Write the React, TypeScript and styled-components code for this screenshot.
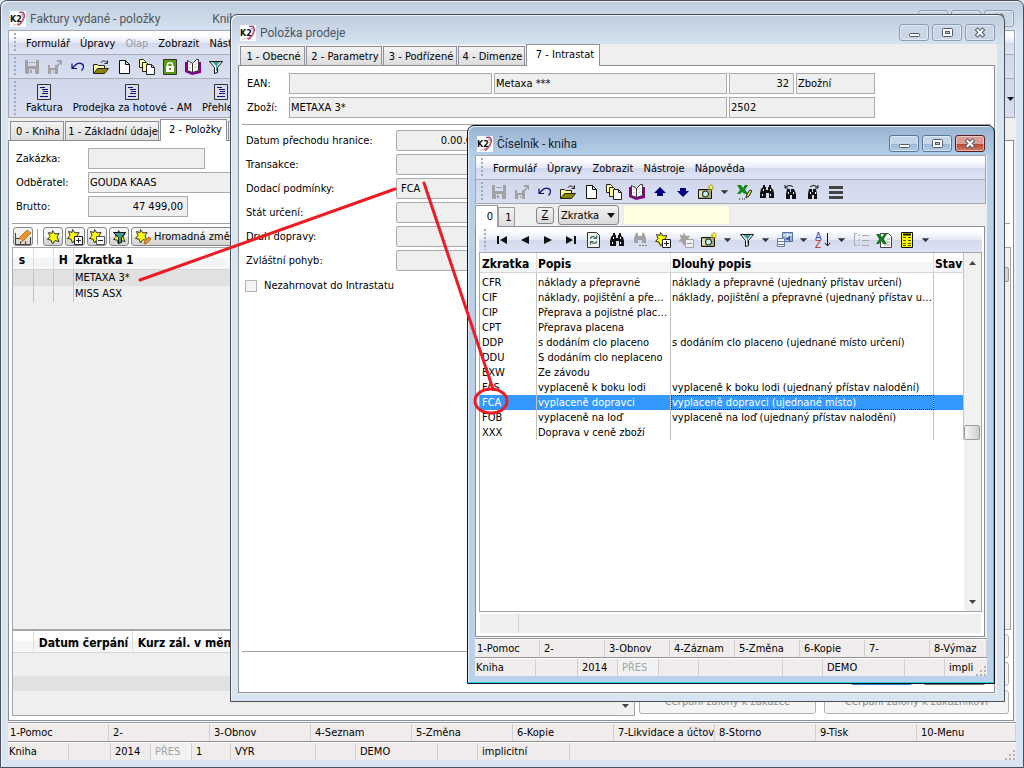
import React from 'react';
import styled, { createGlobalStyle, css } from 'styled-components';

const uiFont = '"DejaVu Sans Condensed", "DejaVu Sans", "Noto Sans", sans-serif';
const titleFont = 'Roboto, "Open Sans", "Noto Sans", sans-serif';

const Global = createGlobalStyle`
  *, *::before, *::after { box-sizing: border-box; }
  html, body { margin: 0; height: 100%; }
  body { font: 11px/14px ${uiFont}; color: #000; background: #d7e4f2; overflow: hidden; }
  #root { height: 100%; }
  button, input, select { font: inherit; color: inherit; margin: 0; }
`;

/* ---------- window chrome ---------- */

const Desktop = styled.div`
  position: relative;
  height: 100%;
  overflow: hidden;
`;

type Tone = 'active' | 'idle';

const WindowFrame = styled.section<{ $tone: Tone }>`
  display: flex;
  flex-direction: column;
  height: 100%;
  padding: 0 7px 7px;
  border: 1px solid ${p => (p.$tone === 'active' ? '#101418' : '#4b4f55')};
  border-radius: 7px 7px 0 0;
  background: ${p =>
    p.$tone === 'active'
      ? 'linear-gradient(#98b3d1 0, #b9d1ea 32px, #b9d1ea 100%)'
      : 'linear-gradient(#bfcedd 0, #d7e4f2 32px, #d7e4f2 100%)'};
  box-shadow: ${p =>
    p.$tone === 'active'
      ? 'inset -1px -1px 0 #2fd0e6, inset 1px 1px 0 #e4eefa'
      : 'inset 1px 1px 0 #eef4fb'};
`;

const ItemWindow = styled.div`
  position: absolute;
  inset: 14px 19px 66px 230px;
`;

const ListWindow = styled.div`
  position: absolute;
  inset: 125px 29px 84px 467px;
`;

const TitleBar = styled.header`
  display: flex;
  align-items: center;
  flex: none;
  height: 29px;
  padding: 6px 2px 0;
`;

const TitleText = styled.h1<{ $tone: Tone }>`
  margin: 0 0 0 4px;
  font: 12px/16px ${titleFont};
  color: ${p => (p.$tone === 'active' ? '#1b2430' : '#50565e')};
  white-space: pre;
`;

const TitleExtra = styled.span`
  margin-left: 52px;
`;

const CaptionButtons = styled.div`
  display: flex;
  gap: 3px;
  margin-left: auto;
`;

const CaptionButton = styled.button<{ $kind: 'idle' | 'blue' | 'red' }>`
  display: flex;
  align-items: center;
  justify-content: center;
  width: 30px;
  height: 17px;
  padding: 0;
  border-radius: 3px;
  border: 1px solid ${p => ({ idle: '#8d9cb3', blue: '#5b7697', red: '#5c1c22' })[p.$kind]};
  box-shadow: inset 0 0 0 1px rgba(255, 255, 255, 0.45);
  background: ${p =>
    ({
      idle: '#c9d6e6',
      blue: 'linear-gradient(#c3d6ea 0 50%, #9ab6d4 50%, #b4cee8)',
      red: 'linear-gradient(#dc9d94 0 50%, #b8402c 50%, #cf8069)',
    })[p.$kind]};
`;

const CaptionGlyph = ({ name }: { name: 'min' | 'max' | 'close' }) => (
  <svg width="14" height="11" viewBox="0 0 14 11">
    {name === 'min' && <rect x="2.5" y="6.5" width="10" height="3" rx="1" fill="#fff" stroke="#4f596b" />}
    {name === 'max' && (
      <g fill="none" stroke="#4f596b">
        <rect x="2.5" y="1.5" width="10" height="8" rx="1" fill="#fff" />
        <rect x="5.5" y="4.5" width="4" height="2" fill="#b8c8da" />
      </g>
    )}
    {name === 'close' && (
      <g strokeLinecap="square">
        <path d="M4.500 3L9.500 8M9.500 3L4.500 8" stroke="#4f596b" strokeWidth="4" />
        <path d="M4.500 3L9.500 8M9.500 3L4.500 8" stroke="#fff" strokeWidth="2" />
      </g>
    )}
  </svg>
);

const K2Logo = () => (
  <svg width="16" height="16" viewBox="0 0 16 16">
    <rect width="16" height="16" fill="#fff" />
    <path d="M9 1.500c4-1.500 6 1 5 5-1 4-3 6-6 8" fill="none" stroke="#8b2c70" strokeWidth="1.300" />
    <path d="M11 3c3 1 3 4 1 7-1 2-3 3-5 4" fill="none" stroke="#e8746c" strokeWidth="1.200" />
    <path d="M3 14.500l5-2 4-3" fill="none" stroke="#e3b7a8" />
    <text x="0" y="11" fontFamily="DejaVu Sans, sans-serif" fontWeight="bold" fontSize="8" fill="#111">K2</text>
  </svg>
);

const Caption = ({ tone, title, extra }: { tone: Tone; title: string; extra?: string }) => (
  <TitleBar>
    <K2Logo />
    <TitleText $tone={tone}>
      {title}
      {extra && <TitleExtra>{extra}</TitleExtra>}
    </TitleText>
    <CaptionButtons>
      <CaptionButton $kind={tone === 'active' ? 'blue' : 'idle'} aria-label="Minimalizovat"><CaptionGlyph name="min" /></CaptionButton>
      <CaptionButton $kind={tone === 'active' ? 'blue' : 'idle'} aria-label="Maximalizovat"><CaptionGlyph name="max" /></CaptionButton>
      <CaptionButton $kind={tone === 'active' ? 'red' : 'idle'} aria-label="Zavřít"><CaptionGlyph name="close" /></CaptionButton>
    </CaptionButtons>
  </TitleBar>
);

const Client = styled.div`
  display: flex;
  flex-direction: column;
  flex: 1;
  min-height: 0;
  background: #efefef;
`;

/* ---------- icons ---------- */

const starPath = 'M5.500.500l2.500 3.500 4-.5-2 3.500 2 4.500-4-1-2.500 3.500-1.500-4-3.500-.5 2.500-3-1.500-4 3.500 1z';

const glyphs: Record<string, React.ReactNode> = {
  save: <g><path d="M1 1h14v14H2l-1-1z" fill="#a2a2a2" /><path d="M4 1h8v6H4zM5 10h6v5H5z" fill="#d5daee" /><path d="M6 11h2v3H6zM5 3h6v1H5z" fill="#a2a2a2" /></g>,
  export: <g><path d="M1 6h10v9H1z" fill="#a2a2a2" /><path d="M3 6h5v3H3zM4 11h4v4H4z" fill="#d5daee" /><path d="M6 12h1v2H6zM10 1h5v5h-1V4l-3 3-1-1 3-3h-3z" fill="#a2a2a2" /></g>,
  undo: <path d="M2 4.500v5h5M2.500 9l3-3c3-3 8-2 8 1.500 0 2-1 3-2 4" fill="none" stroke="#10107a" strokeWidth="1.200" />,
  folder: <g><path d="M.5 14.500v-9h4l1 1h6v3" fill="#ffff9c" stroke="#222" /><path d="M.5 14.500l4-5h11l-4 5z" fill="#8a8400" stroke="#222" /><path d="M8 3.500c1-2 4-2 6 0m.5-2v3h-3" fill="none" stroke="#222" /></g>,
  page: <path d="M3.500 1.500h6l4 4v9h-10zM9.500 1.500v4h4" fill="#fff" stroke="#111" />,
  copies: <g stroke="#222"><path d="M.5.500h4l2 2v6h-6z" fill="#ffff9c" /><path d="M3.500 3.500h4l2 2v7h-6z" fill="#ffff9c" /><path d="M7.500 5.500h5l3 3v7h-8zM12.500 5.500v3h3" fill="#fff" /></g>,
  lock: <g><path d="M1.500.5h13v15h-13z" fill="#5a9a12" stroke="#333" /><path d="M5.500 8V5.500c0-2.500 5-2.500 5 0V8" fill="none" stroke="#fff" strokeWidth="1.500" /><path d="M4 7h8v6H4z" fill="#fff" /><path d="M7 9h2v2H7z" fill="#5a9a12" /></g>,
  book: <g><path d="M0 3v10l7 3 9-2V3h-2v9H2V3z" fill="#8b008b" /><path d="M2.500 1.500l5 3v9l-5-2zM7.500 4.500l4-4h2v11l-6 2z" fill="#fff" stroke="#333" /><path d="M9.500 6l2-2M9.500 9l2-2M4.500 5l1 1M4.500 8l1 1" stroke="#aaa" /></g>,
  filter: <g><path d="M1.500 2.500h13l-5 6v5l-3 1v-6z" fill="#fff" stroke="#111" /><path d="M4 3h8l-3 4v5H8V7z" fill="#3fa0a0" /></g>,
  up: <path d="M8 3l6 6h-3v3H5V9H2z" fill="#00007f" />,
  down: <path d="M8 13l6-6h-3V4H5v3H2z" fill="#00007f" />,
  camera: <g><path d="M.5 5.500h13v9H.5z" fill="#a8aa70" stroke="#111" /><path d="M1 7h3v6H1z" fill="#e0e0b8" /><circle cx="7.500" cy="10" r="3" fill="#c6f0f0" stroke="#111" /><path d="M13 0v7M9.500 3.500h6M10.500 1l5 5M15.500 1l-5 5" stroke="#b0a800" /><path d="M12 2h2v3h-2z" fill="#ffff30" /></g>,
  drop: <path d="M4 6h8l-4 4z" fill="#333" />,
  excelPen: <g><path d="M1 1h4l2 3 2-3h3L9 6l4 4H9L6 8l-2 2H1l3-4z" fill="#0e8a1d" /><path d="M10 14l1-4 3-4 2 1-3 5z" fill="#e8d83a" stroke="#222" /><path d="M3 15h1M6 15h1M8 15h1" stroke="#111" /></g>,
  binoculars: <g><path d="M4 1h2v2h1v3h2V3h1V1h2v2l1 2 1 0 1 4v5h-5v-5H7v5H1V9l1-4 2-2z" fill="#111" /><path d="M4 5h1v2H4zM11 5h1v2h-1zM3 10h1v2H3zM11 10h1v2h-1z" fill="#fff" /></g>,
  binoPrev: <g><path d="M5 5h3v3h1V5h3l2 5v5h-4v-4H8v4H4v-5z" fill="#111" /><path d="M6 8h1v2H6zM11 8h1v2h-1z" fill="#fff" /><path d="M3 1v3h3M3 4c2-3 6-3 8-1" fill="none" stroke="#111" /></g>,
  binoNext: <g><path d="M4 5h3v3h1V5h3l1 5v5H9v-4H7v4H3v-5z" fill="#111" /><path d="M5 8h1v2H5zM10 8h1v2h-1z" fill="#fff" /><path d="M13 1v3h-3M13 4c-2-3-6-3-8-1" fill="none" stroke="#111" /></g>,
  binoGray: <g><path d="M4 1h2v3h4V1h2l2 5v5h-4V8H6v3H2V6z" fill="#a2a2a2" /><path d="M7 13h2v1H7zM10 13h2v1h-2zM13 13h2v1h-2z" fill="#777" /></g>,
  list: <g fill="#444"><path d="M1 2h14v3H1zM1 7h14v3H1zM1 12h14v3H1z" /></g>,
  first: <path d="M3 4h2v8H3zM13 4v8L6 8z" fill="#111" />,
  prev: <path d="M12 4v8L4 8z" fill="#111" />,
  next: <path d="M4 4v8l8-4z" fill="#111" />,
  last: <path d="M11 4h2v8h-2zM3 4v8l7-4z" fill="#111" />,
  refresh: <g><path d="M1.500.5h9l3 3v12h-12z" fill="#eef3ec" stroke="#333" /><path d="M4.500 7c0-3 4-3 5-1m1-2.500v3h-3M10.500 9c0 3-4 3-5 1m-1 2.500v-3h3" fill="none" stroke="#3c6a66" strokeWidth="1.200" /></g>,
  starPlus: <g><path d={starPath} fill="#ffff00" stroke="#333" /><path d="M7.500 7.500h8v8h-8z" fill="#fff" stroke="#222" /><path d="M9 11.500h5M11.500 9v5" stroke="#222" /></g>,
  starMinus: <g><path d={starPath} fill="#ffff00" stroke="#333" /><path d="M7.500 7.500h8v8h-8z" fill="#fff" stroke="#555" /><path d="M9 11.500h5" stroke="#222" /></g>,
  starGray: <g><path d={starPath} fill="#a2a2a2" /><path d="M7.500 7.500h8v8h-8z" fill="#eee" stroke="#a2a2a2" /><path d="M9 11.500h5" stroke="#999" /></g>,
  star: <g transform="translate(2 1)"><path d={starPath} fill="#ffff00" stroke="#333" /></g>,
  starFilter: <g><g transform="translate(2 1)"><path d={starPath} fill="#ffff00" stroke="#333" /></g><path d="M2.500 3.500h12l-4 5v5l-3 1v-6z" fill="#3c9a9a" stroke="#111" /></g>,
  starPen: <g><path d={starPath} fill="#ffff00" stroke="#333" /><path d="M9 15l1-3 4-4 2 2-4 4z" fill="#e7962e" stroke="#b36a12" /></g>,
  pen: <g><path d="M.5 4v11.500h15V8M.5 9.500h4M5.500 15v-3M10.500 15v-3" stroke="#444" fill="none" /><path d="M4 11l1-3 7-7 4 3-7 7-3 2z" fill="#e7962e" stroke="#c2741b" /><path d="M4 12l1-2 2 2z" fill="#fff" /></g>,
  columns: <g><path d="M5.500.5h10v9h-10z" fill="#9bb4da" stroke="#556f9c" /><path d="M6 3h9M10.500 1v8" stroke="#fff" /><path d="M.5 6.500h7v8h-7z" fill="#fff" stroke="#6b7fa5" /><path d="M1 9.500h6M1 12.500h6" stroke="#6b7fa5" /><path d="M8 7l5-3v5z" fill="#3c5a95" /></g>,
  sort: <g><text x="0" y="8" fontSize="10" fontFamily="Liberation Sans, sans-serif" fill="#3556b8">A</text><text x="0" y="16" fontSize="10" fontFamily="Liberation Sans, sans-serif" fill="#b03030">Z</text><path d="M12.500 1v12M10 11l2.500 3 2.500-3" stroke="#111" fill="none" /></g>,
  tree: <g fill="none" stroke="#a6a6aa"><path d="M4 1.500H1.500v12H4M5 3.500l2-1M5 8.500l2-1M5 13.500l2-1M9 3.500h7M9 8.500h7M9 13.500h7" /></g>,
  excel: <g><path d="M4.500 1.500h8l3 3v11h-11z" fill="#fff" stroke="#444" /><path d="M11 7h3M11 10h3M8 13h6" stroke="#999" /><path d="M0 2h4l2 3 2-3h3L8 7l3 5H7L5 9l-2 3H0l3-5z" fill="#197a26" /></g>,
  table: <g><path d="M2.500.5h11v15h-11z" fill="#ffff00" stroke="#111" /><path d="M4 2.500h8" stroke="#111" strokeWidth="2" /><path d="M4 5.500h3M9 5.500h3M4 8.500h3M9 8.500h3M4 11.500h3M9 11.500h3M4 13.500h3M9 13.500h3" stroke="#55550a" /></g>,
  document: <g><path d="M1.500.5h13v15h-13z" fill="#dcdce8" stroke="#333" /><path d="M4 3.500h5M6 5.500h6M7 7.500h5M6 9.500h6M4 12.500h8" stroke="#10107a" /></g>,
};

const Icon = ({ name }: { name: string }) => (
  <svg width="16" height="16" viewBox="0 0 16 16" aria-hidden="true">{glyphs[name]}</svg>
);

/* ---------- bars ---------- */

const BarStack = styled.div`
  flex: none;
  margin-right: 1px;
  border: 1px solid #a3a6ae;
  background: #a9abb5;
  display: flex;
  flex-direction: column;
  gap: 1px;
`;

const Bar = styled.div<{ $height?: number; $light?: boolean }>`
  position: relative;
  display: flex;
  align-items: center;
  flex: none;
  height: ${p => p.$height ?? 23}px;
  overflow: hidden;
  background: ${p =>
    p.$light ? 'linear-gradient(#fdfdff 0 20%, #e6e9f7 50%, #d3d9ed 52%, #dfe3f4)' : 'linear-gradient(#d1d8ec, #d9dff1)'};
`;

const Grip = styled.span`
  flex: none;
  align-self: stretch;
  width: 2px;
  margin: 2px 0 2px 5px;
  background: repeating-linear-gradient(#a2a9bd 0 2px, transparent 2px 4px);
`;

const MenuButton = styled.button`
  padding: 2px 0 0;
  border: 0;
  background: none;
  margin-left: 10px;
  white-space: nowrap;
  &:disabled { color: #9c9ea6; }
`;

const ToolButton = styled.button<{ $narrow?: boolean }>`
  display: flex;
  align-items: center;
  justify-content: center;
  flex: none;
  width: ${p => (p.$narrow ? 15 : 23)}px;
  height: 22px;
  padding: 0;
  border: 0;
  background: none;
`;

const ToolRow = styled.div`
  display: flex;
  margin-left: 4px;
`;

const LaunchButton = styled.button`
  display: flex;
  flex-direction: column;
  align-items: center;
  gap: 1px;
  flex: none;
  padding: 2px 0 0;
  border: 0;
  background: none;
  margin-left: 10px;
  white-space: nowrap;
`;

const BarEnd = styled.span`
  display: flex;
  align-items: flex-end;
  align-self: flex-end;
  margin-left: auto;
  padding-bottom: 16px;
`;

const Menu = ({ items }: { items: { label: string; off?: boolean }[] }) => (
  <Bar $light>
    <Grip />
    {items.map(i => (
      <MenuButton key={i.label} disabled={i.off}>{i.label}</MenuButton>
    ))}
  </Bar>
);

const Tools = ({ names }: { names: string[] }) => (
  <ToolRow>
    {names.map((n, i) => (
      <ToolButton key={i} $narrow={n === 'drop'} aria-label={n}><Icon name={n} /></ToolButton>
    ))}
  </ToolRow>
);

/* ---------- tabs ---------- */

const TabStrip = styled.div<{ $height: number }>`
  display: flex;
  align-items: flex-end;
  flex: none;
  height: ${p => p.$height}px;
  padding-left: 2px;
  gap: 1px;
`;

const Tab = styled.button<{ $w: number; $on?: boolean }>`
  flex: none;
  width: ${p => p.$w}px;
  height: ${p => (p.$on ? 22 : 19)}px;
  margin-bottom: ${p => (p.$on ? -1 : 0)}px;
  padding: ${p => (p.$on ? '0 0 1px 4px' : '2px 0 0 2px')};
  position: relative;
  border: 1px solid #8e8f99;
  border-bottom: 0;
  background: ${p => (p.$on ? '#fff' : 'linear-gradient(#f3f3f3, #dcdcdc)')};
  white-space: nowrap;
`;

const Panel = styled.div`
  display: flex;
  flex-direction: column;
  flex: 1;
  min-height: 0;
  margin-right: 2px;
  border: 1px solid #8b8c96;
  background: #fff;
`;

/* ---------- form ---------- */

const Rule = styled.hr`
  flex: none;
  align-self: stretch;
  height: 1px;
  margin: 0 3px;
  border: 0;
  background: #a0a0a0;
`;

const FormRows = styled.div<{ $pad: string }>`
  display: flex;
  flex-direction: column;
  gap: 3px;
  padding: ${p => p.$pad};
`;

const FormRow = styled.div`
  display: flex;
  gap: 2px;
  height: 21px;
`;

const Label = styled.label<{ $w: number }>`
  flex: none;
  width: ${p => p.$w}px;
  line-height: 22px;
  white-space: nowrap;
`;

const Field = styled.input<{ $w: number; $right?: boolean; $round?: boolean }>`
  flex: none;
  width: ${p => p.$w}px;
  height: 21px;
  padding: 0 4px 0 ${p => (p.$round ? 4 : 1)}px;
  border: 1px solid #acacac;
  border-radius: ${p => (p.$round ? 2 : 0)}px;
  background: #efefef;
  outline: 0;
  text-align: ${p => (p.$right ? 'right' : 'left')};
`;

const CheckRow = styled.label`
  display: flex;
  align-items: center;
  gap: 7px;
  padding: 8px 6px;
  line-height: 14px;
`;

const CheckBox = styled.input`
  appearance: none;
  width: 12px;
  height: 12px;
  border: 1px solid #b4b4b4;
  background: #f4f4f4;
`;

const SmallButton = styled.button<{ $wide?: boolean }>`
  display: flex;
  align-items: center;
  justify-content: center;
  gap: 3px;
  flex: none;
  width: ${p => (p.$wide ? 'auto' : '20px')};
  height: 19px;
  padding: ${p => (p.$wide ? '0 6px 0 3px' : '0')};
  border: 1px solid #85868a;
  border-radius: 3px;
  background: linear-gradient(#f4f4f4 0 50%, #e2e2e2 50%, #d4d4d4);
`;

const ButtonRow = styled.div`
  display: flex;
  gap: 2px;
  padding: 3px 4px 1px;
`;

const Divider = styled.span`
  width: 1px;
  margin: 2px 3px 1px 2px;
  background: #a0a0a0;
`;

/* ---------- grids ---------- */

const GridBox = styled.div<{ $gray?: boolean }>`
  display: flex;
  flex: 1;
  min-height: 0;
  overflow: hidden;
  margin: 0 2px 0 3px;
  border: 1px solid #a4a5ad;
  background: ${p => (p.$gray ? '#efefef' : '#fff')};
`;

const GridBody = styled.div`
  flex: 1;
  min-width: 0;
  overflow: hidden;
`;

const Table = styled.table<{ $row: number; $pinned?: boolean; $tall?: boolean }>`
  width: 100%;
  table-layout: fixed;
  border-collapse: separate;
  border-spacing: 0;
  th, td {
    text-align: left;
    white-space: nowrap;
    overflow: hidden;
    border-right: 1px solid #c3c3c3;
  }
  th {
    height: ${p => (p.$tall ? 22 : 20)}px;
    padding: 2px 0 0 1px;
    font: bold 12px/16px ${uiFont};
    border-right-color: #dedede;
    border-bottom: 1px solid #d5d5d5;
    background: linear-gradient(#fff 0 45%, #f3f4f6 46%, #f5f6f8);
  }
  td { height: ${p => p.$row}px; padding: 0 0 0 1px; line-height: ${p => p.$row}px; text-overflow: ellipsis; }
  tr > :first-child { padding-left: 2px; }
  tr > :last-child { border-right: ${p => (p.$pinned ? '1px solid #c3c3c3' : '0')}; }
`;

const Row = styled.tr<{ $mark?: 'gray' | 'blue' }>`
  ${p => p.$mark === 'gray' && css`background: #e1e1e1;`}
  ${p => p.$mark === 'blue' && css`background: #3399ff; color: #fff;
    td:nth-child(3) { outline: 1px dotted #40260c; outline-offset: -1px; }`}
`;

const Col = styled.col<{ $w?: number }>`
  width: ${p => (p.$w ? `${p.$w}px` : 'auto')};
`;

const Spacer = styled.tr`
  height: 1px;
  td { height: 2px; }
`;

const ScrollTrack = styled.div`
  display: flex;
  flex-direction: column;
  flex: none;
  width: 17px;
  background: #f1f1f1;
`;

const ScrollArrow = styled.button`
  display: flex;
  align-items: center;
  justify-content: center;
  flex: none;
  height: 19px;
  padding: 0;
  border: 0;
  background: none;
`;

const ScrollThumb = styled.span`
  flex: none;
  height: 15px;
  margin-right: 1px;
  border: 1px solid #9b9b9b;
  border-radius: 2px;
  background: linear-gradient(90deg, #f6f6f6, #cfcfcf);
`;

const ScrollGap = styled.span<{ $grow: number }>`
  flex: ${p => p.$grow} 1 0;
`;

const Scroll = ({ before }: { before: number }) => (
  <ScrollTrack>
    <ScrollArrow aria-label="Nahoru"><svg width="7" height="4"><path d="M0 4h7L3.500 0z" fill="#444" /></svg></ScrollArrow>
    <ScrollGap $grow={before} />
    <ScrollThumb />
    <ScrollGap $grow={1} />
    <ScrollArrow aria-label="Dolů"><svg width="7" height="4"><path d="M0 0h7L3.500 4z" fill="#444" /></svg></ScrollArrow>
  </ScrollTrack>
);

/* ---------- bottom strips ---------- */

const Strip = styled.div`
  position: relative;
  display: flex;
  flex: none;
  height: 19px;
  border-top: 1px solid #8f9095;
  background: #f0ecec;
  box-shadow: inset 0 1px 0 #fff;
`;

const Strips = styled.footer`
  flex: none;
  padding-top: 1px;
  background: #fff;
`;

const cellBox = css<{ $w?: number }>`
  flex: ${p => (p.$w ? `0 0 ${p.$w}px` : '1 1 0')};
  min-width: 0;
  margin-top: 1px;
  border: 0;
  border-right: 1px solid #d0cece;
  text-align: left;
  line-height: 18px;
  white-space: nowrap;
  overflow: hidden;
`;

const Cell = styled.span<{ $w?: number; $muted?: boolean }>`
  ${cellBox}
  padding-left: 4px;
  &:first-child { padding-left: 1px; }
  &:nth-last-child(2) { border-right: 0; }
  ${p => p.$muted && css`color: #a3a3a3; background: #f2f2f2;`}
`;

const FnButton = styled.button<{ $w?: number }>`
  ${cellBox}
  padding: 0 0 0 4px;
  background: none;
  &:first-child { padding-left: 2px; }
`;

const SizeGrip = styled.svg`
  align-self: flex-end;
  flex: none;
  margin-right: 1px;
`;

const Corner = () => (
  <SizeGrip width="10" height="10" fill="#b5b3b3">
    <path d="M8 0h2v2H8zM8 4h2v2H8zM8 8h2v2H8zM4 4h2v2H4zM4 8h2v2H4zM0 8h2v2H0z" />
  </SizeGrip>
);

type StatusCell = { text?: string; w?: number; muted?: boolean };

const StatusStrips = ({ keys, keyWidth, cells }: { keys: string[]; keyWidth: number; cells: StatusCell[] }) => (
  <Strips>
    <Strip>
      {keys.map((k, i) => (
        <FnButton key={k} $w={i < keys.length - 1 ? keyWidth : undefined}>{k}</FnButton>
      ))}
    </Strip>
    <Strip>
      {cells.map((c, i) => (
        <Cell key={i} $w={c.w} $muted={c.muted}>{c.text}</Cell>
      ))}
      <Corner />
    </Strip>
  </Strips>
);

/* ---------- invoice window ---------- */

const LowerArea = styled.div`
  display: flex;
  flex: none;
  height: 86px;
  margin-bottom: 4px;
`;

const LowerGrid = styled.div`
  display: flex;
  flex: 0 0 626px;
  > div { margin-right: 0; }
`;

const LowerButtons = styled.div`
  display: grid;
  flex: 1;
  grid-template-columns: 177px 1fr;
  grid-template-rows: repeat(3, 24px);
  gap: 4px 8px;
  padding: 4px 4px 0 4px;
`;

const WideButton = styled.button`
  border: 1px solid #b0b1b5;
  border-radius: 3px;
  background: #f4f4f4;
  color: #8d8d8d;
`;

const MarkedLine = styled.div`
  height: 15px;
  margin-top: 23px;
  background: #e1e1e1;
`;

const InvoiceWindow = () => (
  <WindowFrame $tone="idle">
    <Caption tone="idle" title="Faktury vydané - položky" extra="Kniha" />
    <Client>
      <BarStack>
        <Menu items={[{ label: 'Formulář' }, { label: 'Úpravy' }, { label: 'Olap', off: true }, { label: 'Zobrazit' }, { label: 'Nástroje' }]} />
        <Bar><Grip /><Tools names={['save', 'export', 'undo', 'folder', 'page', 'copies', 'lock', 'book', 'filter']} /></Bar>
        <Bar $height={38}>
          <Grip />
          {['Faktura', 'Prodejka za hotové - AM', 'Přehled'].map(t => (
            <LaunchButton key={t}><Icon name="document" />{t}</LaunchButton>
          ))}
          <BarEnd><svg width="7" height="4"><path d="M0 0h7L3.500 4z" fill="#111" /></svg></BarEnd>
        </Bar>
      </BarStack>
      <TabStrip $height={22}>
        <Tab $w={54}>0 - Kniha</Tab>
        <Tab $w={94}>1 - Základní údaje</Tab>
        <Tab $w={67} $on>2 - Položky</Tab>
        <Tab $w={40}>3</Tab>
      </TabStrip>
      <Panel>
        <FormRows $pad="7px 7px 6px">
          <FormRow><Label $w={70} htmlFor="order">Zakázka:</Label><Field id="order" $w={117} readOnly /></FormRow>
          <FormRow><Label $w={70} htmlFor="customer">Odběratel:</Label><Field id="customer" $w={260} defaultValue="GOUDA KAAS" readOnly /></FormRow>
          <FormRow><Label $w={70} htmlFor="gross">Brutto:</Label><Field id="gross" $w={100} $right defaultValue="47 499,00" readOnly /></FormRow>
        </FormRows>
        <Rule />
        <ButtonRow>
          <SmallButton aria-label="Upravit"><Icon name="pen" /></SmallButton>
          <Divider />
          <SmallButton aria-label="Hvězda"><Icon name="star" /></SmallButton>
          <SmallButton aria-label="Přidat"><Icon name="starPlus" /></SmallButton>
          <SmallButton aria-label="Odebrat"><Icon name="starMinus" /></SmallButton>
          <SmallButton aria-label="Filtr"><Icon name="starFilter" /></SmallButton>
          <SmallButton $wide><Icon name="starPen" />Hromadná změna</SmallButton>
        </ButtonRow>
        <GridBox $gray>
          <GridBody>
            <Table $row={16} $tall>
              <colgroup><Col $w={21} /><Col $w={20} /><Col $w={20} /><Col /></colgroup>
              <thead><tr><th>&nbsp;s</th><th /><th>&nbsp;H</th><th>Zkratka 1</th></tr></thead>
              <tbody>
                <Row $mark="gray"><td /><td /><td /><td>METAXA 3*</td></Row>
                <Row><td /><td /><td /><td>MISS ASX</td></Row>
              </tbody>
            </Table>
          </GridBody>
          <Scroll before={0} />
        </GridBox>
        <LowerArea>
          <LowerGrid>
            <GridBox $gray>
              <GridBody>
                <Table $row={24} $tall>
                  <colgroup><Col $w={21} /><Col $w={99} /><Col /></colgroup>
                  <thead><tr><th /><th>&nbsp;Datum čerpání</th><th>&nbsp;Kurz zál. v měně</th></tr></thead>
                </Table>
                <MarkedLine />
              </GridBody>
              <Scroll before={0} />
            </GridBox>
          </LowerGrid>
          <LowerButtons>
            <WideButton disabled /><WideButton disabled />
            <WideButton disabled /><WideButton disabled />
            <WideButton disabled>Čerpání zálohy k zakázce</WideButton>
            <WideButton disabled>Čerpání zálohy k zákazníkovi</WideButton>
          </LowerButtons>
        </LowerArea>
      </Panel>
      <StatusStrips
        keyWidth={101}
        keys={['1-Pomoc', '2-', '3-Obnov', '4-Seznam', '5-Změna', '6-Kopie', '7-Likvidace a účtová', '8-Storno', '9-Tisk', '10-Menu']}
        cells={[
          { text: 'Kniha', w: 61 }, { w: 42 }, { text: '2014', w: 40 }, { text: 'PŘES', w: 41, muted: true }, { text: '1', w: 39 },
          { text: 'VYR', w: 85 }, { w: 40 }, { text: 'DEMO', w: 82 }, { w: 40 }, { text: 'implicitní', w: 92 }, {},
        ]}
      />
    </Client>
  </WindowFrame>
);

/* ---------- sale item window ---------- */

const DialogFooter = styled.div`
  display: flex;
  justify-content: flex-end;
  align-items: flex-end;
  gap: 10px;
  flex: none;
  height: 40px;
  padding: 0 8px 7px;
`;

const DialogButton = styled.button<{ $primary?: boolean }>`
  width: 63px;
  height: 23px;
  border: 1px solid ${p => (p.$primary ? '#2c7cc4' : '#6f6f6f')};
  border-radius: 3px;
  background: #eee;
`;

const Fill = styled.div`
  flex: 1;
`;

const ClientWhite = styled(Client)`
  padding-bottom: 1px;
`;

const intrastat = [
  { label: 'Datum přechodu hranice:', value: '0.00.0000', right: true },
  { label: 'Transakce:', value: '' },
  { label: 'Dodací podmínky:', value: 'FCA' },
  { label: 'Stát určení:', value: '' },
  { label: 'Druh dopravy:', value: '' },
  { label: 'Zvláštní pohyb:', value: '' },
];

const SaleItem = () => (
  <ItemWindow>
    <WindowFrame $tone="idle">
      <Caption tone="idle" title="Položka prodeje" />
      <ClientWhite>
        <TabStrip $height={21}>
          <Tab $w={65}>1 - Obecné</Tab>
          <Tab $w={76}>2 - Parametry</Tab>
          <Tab $w={74}>3 - Podřízené</Tab>
          <Tab $w={67}>4 - Dimenze</Tab>
          <Tab $w={74} $on>7 - Intrastat</Tab>
        </TabStrip>
        <Panel>
          <FormRows $pad="7px 8px 6px">
            <FormRow>
              <Label $w={40} htmlFor="ean">EAN:</Label>
              <Field id="ean" $w={203} readOnly />
              <Field aria-label="Název" $w={233} defaultValue="Metaxa ***" readOnly />
              <Field aria-label="Kód" $w={65} $right defaultValue="32" readOnly />
              <Field aria-label="Druh" $w={79} defaultValue="Zbožní" readOnly />
            </FormRow>
            <FormRow>
              <Label $w={40} htmlFor="goods">Zboží:</Label>
              <Field id="goods" $w={438} defaultValue="METAXA 3*" readOnly />
              <Field aria-label="Číslo" $w={146} defaultValue="2502" readOnly />
            </FormRow>
          </FormRows>
          <Rule />
          <FormRows $pad="5px 7px 0">
            {intrastat.map((f, i) => (
              <FormRow key={f.label}>
                <Label $w={148} htmlFor={`intrastat-${i}`}>{f.label}</Label>
                <Field id={`intrastat-${i}`} $w={100} $round $right={f.right} defaultValue={f.value} readOnly />
              </FormRow>
            ))}
          </FormRows>
          <CheckRow><CheckBox type="checkbox" />Nezahrnovat do Intrastatu</CheckRow>
          <Fill />
          <Rule />
          <DialogFooter>
            <DialogButton $primary>OK</DialogButton>
            <DialogButton>Storno</DialogButton>
          </DialogFooter>
        </Panel>
      </ClientWhite>
    </WindowFrame>
  </ItemWindow>
);

/* ---------- code list window ---------- */

const FilterStrip = styled.div`
  display: flex;
  align-items: flex-end;
  flex: none;
  height: 22px;
`;

const MiniTab = styled.button<{ $on?: boolean }>`
  position: relative;
  flex: none;
  width: ${p => (p.$on ? 23 : 17)}px;
  height: ${p => (p.$on ? 22 : 19)}px;
  margin-bottom: ${p => (p.$on ? -1 : 0)}px;
  padding: ${p => (p.$on ? '0 0 0 7px' : '1px 0 0 4px')};
  border: 1px solid #9a9ba3;
  border-bottom: 0;
  background: ${p => (p.$on ? '#fff' : 'linear-gradient(#f3f3f3, #dcdcdc)')};
`;

const KeyButton = styled.button`
  align-self: center;
  width: 18px;
  height: 17px;
  margin-left: 21px;
  padding: 0;
  border: 1px solid #85868a;
  border-radius: 3px;
  background: linear-gradient(#f2f2f2, #dadada);
  line-height: 12px;
`;

const Combo = styled.div`
  position: relative;
  align-self: center;
  margin-left: 4px;
  svg { position: absolute; right: 4px; top: 8px; pointer-events: none; }
`;

const ComboSelect = styled.select`
  appearance: none;
  display: block;
  width: 61px;
  height: 20px;
  padding: 1px 0 0 2px;
  border: 1px solid #85868a;
  border-radius: 3px;
  background: linear-gradient(#f2f2f2, #dadada);
`;

const Search = styled.input`
  align-self: center;
  width: 107px;
  height: 20px;
  margin-left: 4px;
  padding: 0 3px;
  border: 1px solid #ececec;
  background: #ffffe1;
`;

const InnerBar = styled.div`
  flex: none;
  margin: 0 2px 0 3px;
`;

const GridFooter = styled.div`
  flex: none;
  height: 19px;
  margin: 2px 3px 3px 4px;
  background: linear-gradient(90deg, transparent 38px, #d2d2d2 38px 39px, transparent 39px), #efefef;
`;

const codes: [string, string, string][] = [
  ['CFR', 'náklady a přepravné', 'náklady a přepravné (ujednaný přístav určení)'],
  ['CIF', 'náklady, pojištění a přepravné', 'náklady, pojištění a přepravné (ujednaný přístav určení)'],
  ['CIP', 'Přeprava a pojistné placeny', ''],
  ['CPT', 'Přeprava placena', ''],
  ['DDP', 's dodáním clo placeno', 's dodáním clo placeno (ujednané místo určení)'],
  ['DDU', 'S dodáním clo neplaceno', ''],
  ['EXW', 'Ze závodu', ''],
  ['FAS', 'vyplaceně k boku lodi', 'vyplaceně k boku lodi (ujednaný přístav nalodění)'],
  ['FCA', 'vyplaceně dopravci', 'vyplaceně dopravci (ujednané místo)'],
  ['FOB', 'vyplaceně na loď', 'vyplaceně na loď (ujednaný přístav nalodění)'],
  ['XXX', 'Doprava v ceně zboží', ''],
];

const CodeList = () => (
  <ListWindow>
    <WindowFrame $tone="active">
      <Caption tone="active" title="Číselník - kniha" />
      <Client>
        <BarStack>
          <Menu items={['Formulář', 'Úpravy', 'Zobrazit', 'Nástroje', 'Nápověda'].map(label => ({ label }))} />
          <Bar>
            <Grip />
            <Tools names={['save', 'export', 'undo', 'folder', 'page', 'copies', 'book', 'up', 'down', 'camera', 'drop', 'excelPen', 'binoculars', 'binoPrev', 'binoNext', 'list']} />
          </Bar>
        </BarStack>
        <FilterStrip>
          <MiniTab $on>0</MiniTab>
          <MiniTab>1</MiniTab>
          <KeyButton><u>Z</u></KeyButton>
          <Combo>
            <ComboSelect aria-label="Hledat podle" defaultValue="Zkratka"><option>Zkratka</option></ComboSelect>
            <svg width="8" height="5"><path d="M0 0h8L4 5z" fill="#111" /></svg>
          </Combo>
          <Search aria-label="Hledat" />
        </FilterStrip>
        <Panel>
          <InnerBar>
            <Bar $height={25} $light>
              <Grip />
              <Tools names={['first', 'prev', 'next', 'last', 'refresh', 'binoculars', 'binoGray', 'starPlus', 'starGray', 'camera', 'drop', 'filter', 'drop', 'columns', 'drop', 'sort', 'drop', 'tree', 'excel', 'table', 'drop']} />
            </Bar>
          </InnerBar>
          <GridBox>
            <GridBody>
              <Table $row={15} $pinned>
                <colgroup><Col $w={57} /><Col $w={134} /><Col $w={263} /><Col /></colgroup>
                <thead><tr><th>Zkratka</th><th>Popis</th><th>Dlouhý popis</th><th>Stav</th></tr></thead>
                <tbody>
                  <Spacer><td /><td /><td /><td /></Spacer>
                  {codes.map(([code, short, long]) => (
                    <Row key={code} $mark={code === 'FCA' ? 'blue' : undefined}>
                      <td>{code}</td><td>{short}</td><td>{long}</td><td />
                    </Row>
                  ))}
                </tbody>
              </Table>
            </GridBody>
            <Scroll before={1} />
          </GridBox>
          <GridFooter />
        </Panel>
        <StatusStrips
          keyWidth={65}
          keys={['1-Pomoc', '2-', '3-Obnov', '4-Záznam', '5-Změna', '6-Kopie', '7-', '8-Výmaz']}
          cells={[
            { text: 'Kniha', w: 61 }, { w: 42 }, { text: '2014', w: 40 }, { text: 'PŘES', w: 41, muted: true }, { w: 40 },
            { w: 84 }, { w: 40 }, { text: 'DEMO', w: 82 }, { w: 40 }, { text: 'impli' },
          ]}
        />
      </Client>
    </WindowFrame>
  </ListWindow>
);

/* ---------- annotation ---------- */

const Markup = styled.svg`
  position: absolute;
  inset: 0;
  width: 100%;
  height: 100%;
  pointer-events: none;
`;

export default function App() {
  return (
    <Desktop>
      <Global />
      <InvoiceWindow />
      <SaleItem />
      <CodeList />
      <Markup fill="none" stroke="#ed1c24" strokeWidth="3" strokeLinecap="round">
        <path d="M140 280L395 189M424 183L493 389" />
        <ellipse cx="491" cy="401" rx="16" ry="12" />
      </Markup>
    </Desktop>
  );
}
